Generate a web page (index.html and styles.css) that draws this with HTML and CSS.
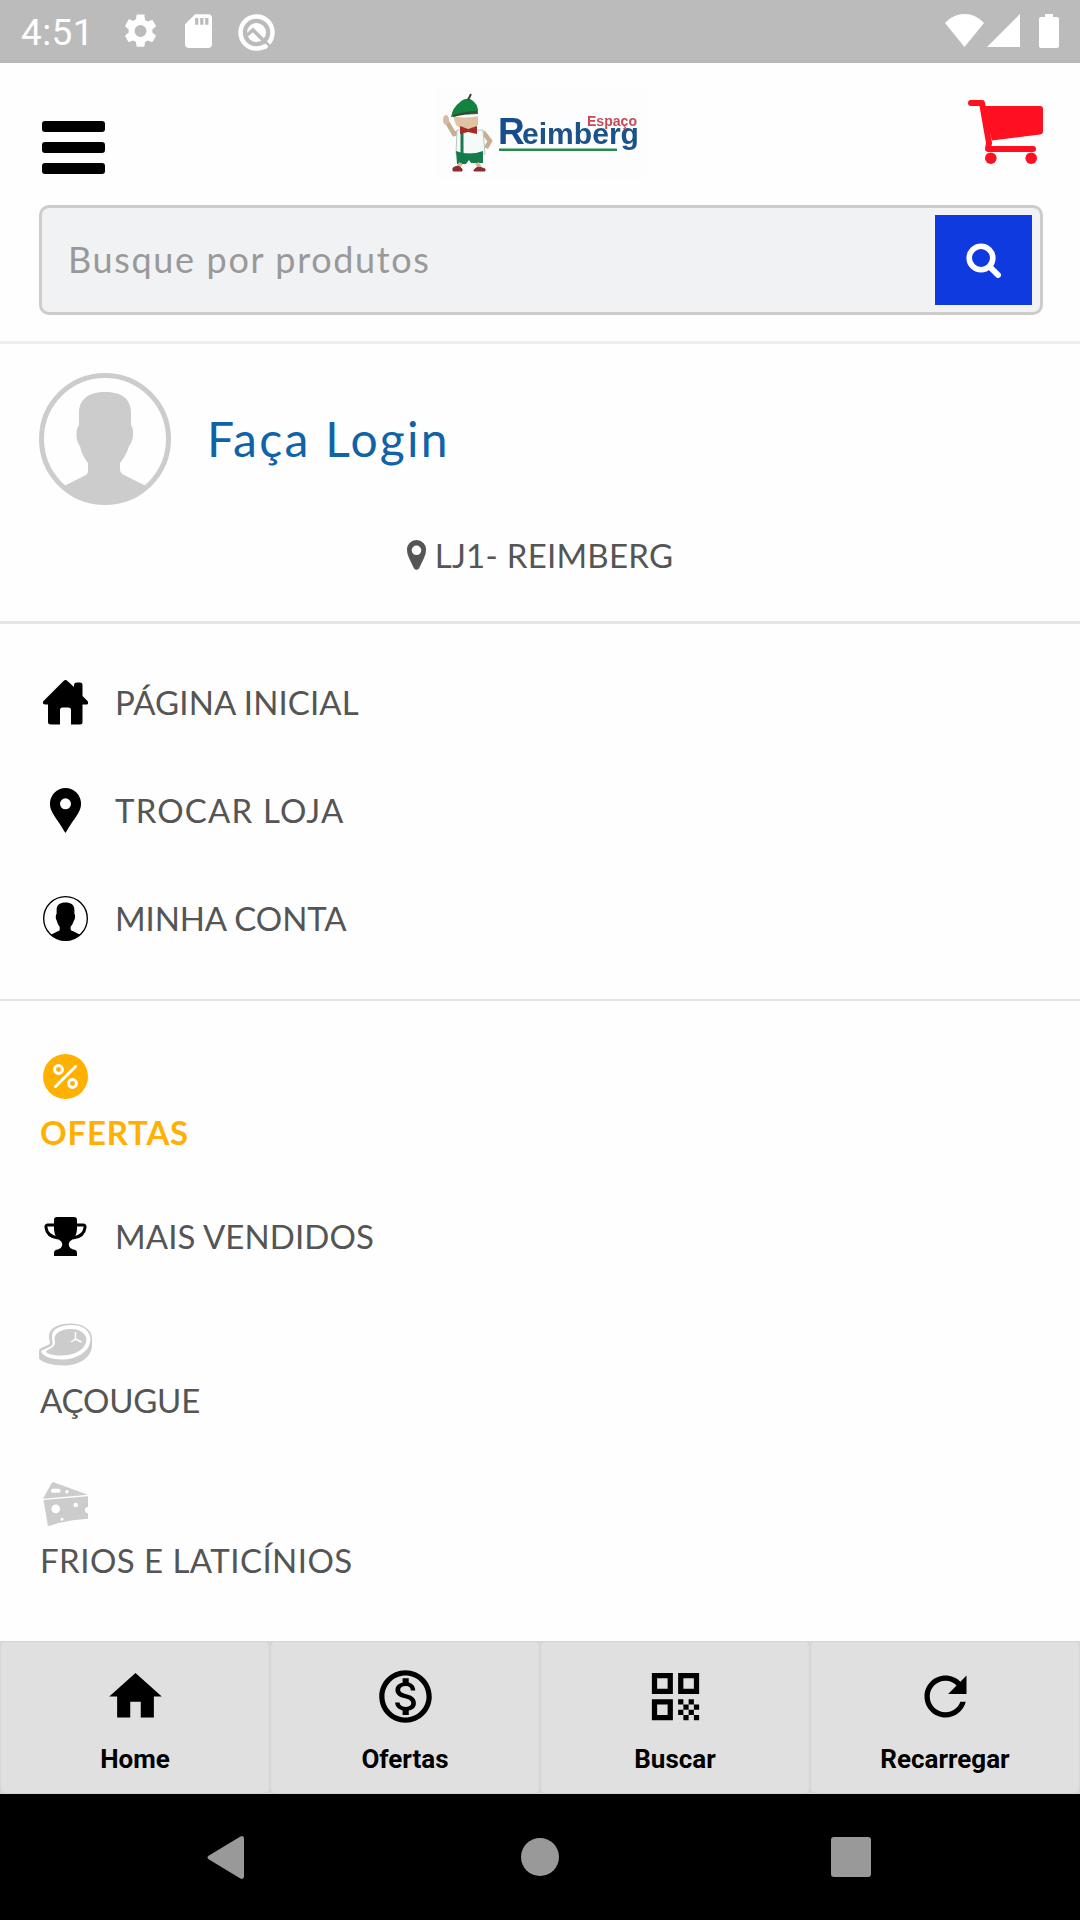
FILE: index.html
```html
<!DOCTYPE html>
<html lang="pt-BR">
<head>
<meta charset="utf-8">
<title>Espaço Reimberg</title>
<link rel="stylesheet" href="styles.css">
</head>
<body>
<svg class="sprite" aria-hidden="true">
  <symbol id="person" viewBox="0 0 132 132">
    <path d="M66 19C82 19 92 25 92 40V52C96 57 94 69 90 73C88 81 84 86 81 90V96C81 100 83 101 87 103L109 114A64 64 0 0 1 23 114L45 103C49 101 49 100 49 96V90C46 86 42 80 41 73C37 69 36 57 40 52V40C40 26 50 19 66 19Z"/>
  </symbol>
</svg>
<div class="screen">
  <div class="status">
    <span class="clock">4:51</span>
    <svg class="st-gear" viewBox="2 2 20 20"><path fill="#fff" d="M19.14 12.94c.04-.3.06-.61.06-.94s-.02-.64-.07-.94l2.03-1.58a.49.49 0 0 0 .12-.61l-1.92-3.32a.49.49 0 0 0-.59-.22l-2.39.96a7 7 0 0 0-1.62-.94l-.36-2.54A.48.48 0 0 0 13.92 2h-3.84a.48.48 0 0 0-.47.41l-.36 2.54c-.59.24-1.13.57-1.62.94l-2.39-.96a.48.48 0 0 0-.59.22L2.74 8.87a.48.48 0 0 0 .12.61l2.03 1.58c-.05.3-.09.63-.09.94s.02.64.07.94l-2.03 1.58a.49.49 0 0 0-.12.61l1.92 3.32c.12.22.37.29.59.22l2.39-.96c.5.38 1.03.7 1.62.94l.36 2.54c.05.24.24.41.48.41h3.84c.24 0 .44-.17.47-.41l.36-2.54a7 7 0 0 0 1.62-.94l2.39.96c.22.08.47 0 .59-.22l1.92-3.32a.48.48 0 0 0-.12-.61zM12 15.6a3.6 3.6 0 1 1 0-7.2 3.6 3.6 0 0 1 0 7.2z"/></svg>
    <svg class="st-sd" viewBox="4 2 16 20"><path fill="#fff" d="M18 2h-8L4.020 8 4 20c0 1.100.9 2 2 2h12c1.100 0 2-.9 2-2V4c0-1.100-.9-2-2-2z"/><path fill="#bbb" d="M10 4.300h1.900v4H10zM13 4.300h1.900v4H13zM16 4.300h1.900v4H16z"/></svg>
    <svg class="st-q" viewBox="0 0 37 37" fill="none"><circle cx="18.500" cy="18.500" r="16" stroke="#fff" stroke-width="4.500"/><circle cx="18.500" cy="18.500" r="9.500" fill="#fff"/><path d="M8 22l7-6 19 19" stroke="#bbb" stroke-width="3.500"/><path d="M26 31l3 3" stroke="#fff" stroke-width="4"/></svg>
    <svg class="st-wifi" viewBox="0 0 39 33"><path fill="#fff" d="M0 9C11-3 28-3 39 9L19.500 33z"/></svg>
    <svg class="st-cell" viewBox="0 0 33 33"><path fill="#fff" d="M33 0v33H0z"/></svg>
    <svg class="st-batt" viewBox="0 0 20 34"><path fill="#fff" d="M6 0h8v3h4a2 2 0 0 1 2 2v27a2 2 0 0 1-2 2H2a2 2 0 0 1-2-2V5a2 2 0 0 1 2-2h4z"/></svg>
  </div>

  <header class="header">
    <div class="topbar">
      <div class="burger"><i></i><i></i><i></i></div>
      <svg class="logo" viewBox="0 0 211 92">
        <rect width="211" height="92" fill="#fdfdfd"/>
        <path d="M12 34l7 12 6-2M48 44l7 9-4 7" fill="none" stroke="#c9ad93" stroke-width="4.500"/>
        <ellipse cx="11" cy="32" rx="3" ry="5" fill="#d9b9a4"/>
        <path d="M18 28q12 3 25 0v9q-12 8-22 0z" fill="#dfc3a2"/>
        <path d="M22 42h26l2 24H21z" fill="#f4faf8" stroke="#b4c9c4" stroke-width="1"/>
        <path d="M27 43v24" stroke="#1c7550" stroke-width="3"/>
        <path d="M16 29q2-10 8-14 5-5 11-4 9 4 8 15-13 0-27 3z" fill="#138240"/>
        <path d="M33 12l3-6M18 28q12-4 24-4" stroke="#3c4a33" stroke-width="2"/>
        <path d="M25 38l8 3 9-3v8l-9-2-8 2z" fill="#a52a28"/>
        <path d="M21 63q13 5 27 0v12H36l-2-3-3 4H22z" fill="#137c48"/>
        <path d="M26 75l-3 5M42 75l3 5" stroke="#d6b899" stroke-width="4"/>
        <path d="M18 80q5-4 9 1v2h-9zM39 82q3-5 11-1v2H39z" fill="#8c2d34" stroke="#8c2d34"/>
        <rect x="64" y="60.500" width="118" height="2.500" fill="#27894e"/>
        <text class="logo-big" x="63" y="56">R</text>
        <text class="logo-mid" x="87" y="56" textLength="117" lengthAdjust="spacingAndGlyphs">eimberg</text>
        <text class="logo-red" x="152" y="38" textLength="50" lengthAdjust="spacingAndGlyphs">Espaço</text>
      </svg>
      <svg class="cart" viewBox="0 0 75 64" fill="#ff1020"><path d="M3 3h11l7 40-1 6h45" fill="none" stroke="#ff1020" stroke-width="6" stroke-linecap="round" stroke-linejoin="round"/><path d="M15 6h57a3 3 0 0 1 3 3v22q0 3-3 3.500L24 40.500z"/><circle cx="22.800" cy="58.200" r="5.800"/><circle cx="63.200" cy="58.200" r="5.800"/></svg>
    </div>
    <div class="search">
      <span class="placeholder">Busque por produtos</span>
      <div class="search-btn"><svg viewBox="0 0 35 35" fill="none" stroke="#fff"><circle cx="15" cy="15" r="11.800" stroke-width="5.600"/><path d="M24 24l8 8" stroke-width="6" stroke-linecap="round"/></svg></div>
    </div>
  </header>

  <section class="account">
    <div class="login">
      <svg class="avatar" viewBox="0 0 132 132" fill="#ccc"><circle cx="66" cy="66" r="63.500" fill="none" stroke="#ccc" stroke-width="5"/><use href="#person"/></svg>
      <span class="login-text">Faça Login</span>
    </div>
    <div class="store">
      <svg viewBox="0 0 19 30"><path fill="#555" fill-rule="evenodd" d="M9.500 0a9.500 9.500 0 0 1 9.500 10q0 4-2 8l-5 10.500q-2.500 2.500-5 0L2 18q-2-4-2-8A9.500 9.500 0 0 1 9.500 0zm0 5.500a4.800 4.800 0 1 0 0 9.600 4.800 4.800 0 0 0 0-9.600z"/></svg>
      <span class="store-text">LJ1- REIMBERG</span>
    </div>
  </section>

  <section class="menu">
    <div class="row">
      <svg class="icon" viewBox="0 0 45 45"><path d="M20.500 1q2-2 4 0L31 7V5q0-2.500 3-2.500h3q2.500 0 2.500 2.500v11l5 5q2 3.500-2 3.500h-3V42q0 2.500-2.500 2.500H28V30q0-2.500-2.500-2.500h-6Q17 27.500 17 30v14.500H8Q5 44.500 5 42V24.500H2Q-1.500 24 .5 21z"/></svg>
      <span class="label t-home">PÁGINA INICIAL</span>
    </div>
    <div class="row">
      <svg class="icon" viewBox="0 0 45 45"><path fill-rule="evenodd" d="M22.500 0A15.500 15.500 0 0 1 38 16c0 8-6 13-15.500 29C13 29 7 24 7 16A15.500 15.500 0 0 1 22.500 0zm0 10.300a5.500 5.500 0 1 0 0 11 5.500 5.500 0 0 0 0-11z"/></svg>
      <span class="label t-store">TROCAR LOJA</span>
    </div>
    <div class="row">
      <svg class="icon" viewBox="0 0 132 132"><circle cx="66" cy="66" r="64" fill="none" stroke="#000" stroke-width="4"/><use href="#person"/></svg>
      <span class="label t-acc">MINHA CONTA</span>
    </div>
  </section>

  <section class="categories">
    <div class="stack">
      <svg class="icon" viewBox="0 0 45 45" fill="none" stroke="#fff"><circle cx="22.500" cy="22.500" r="22.500" fill="#ffb000" stroke="none"/><circle cx="15.500" cy="15.500" r="3.900" stroke-width="3"/><circle cx="29.500" cy="29.500" r="3.900" stroke-width="3"/><path d="M12.500 32.500l20-20" stroke-width="3" stroke-linecap="round"/></svg>
      <span class="label offers">OFERTAS</span>
    </div>
    <div class="row row-best">
      <svg class="icon" viewBox="-1 -3 45 45"><path d="M13 0h17q3 0 3 3v10q-1 8-6 10.500-3 2-2 5.500 1 3 4 3.500 4 0 4 3.500v3H10v-3q0-3.500 4-3.500 3-.5 4-3.500 1-3.500-2-5.500-5-2.500-6-10.500V3q0-3 3-3z"/><path d="M11 8H4q-2.500 0-2 2.500 1 9 12 10.500M32 8h7q2.500 0 2 2.500-1 9-12 10.500" fill="none" stroke="#000" stroke-width="3"/></svg>
      <span class="label t-best">MAIS VENDIDOS</span>
    </div>
    <div class="stack">
      <svg class="icon icon-meat" viewBox="0 0 53 42"><path fill="#ccc" d="M0 27q0-2 3-3l6-2.500q3-1.500 1.500-4.500-.5-2-.5-4C10 4 20 0 31 0c13 0 22 6 22 15v7c0 11-12 20-28 20-12 0-22-3-25-7z"/><path fill="#fff" d="M2 27.500l9.500-4.500c4-2 1-5.500 1.500-11C13.500 5 22 1.500 32 1.500c12 0 19.500 6 19.500 14.500C51 28 38 36 23 36 11 36 3 32 2 27.500z"/><path fill="#ccc" d="M7 27.500C15 23.500 17 22 15.500 15 16.500 8 24 5.500 32 5.500c9 0 15.500 4.500 15.500 11.500C46 26 36 32 22 32c-8 0-15-1.500-15-4.500z"/><path d="M36.500 8.500v7l-4.500 3m4.500-3l6 3" fill="none" stroke="#fff" stroke-width="1.500"/></svg>
      <span class="label t-meat">AÇOUGUE</span>
    </div>
    <div class="stack">
      <svg class="icon icon-cheese" viewBox="0 0 46 45"><path fill="#ccc" d="M8.500 1q1.500-1.500 3-1L46 12.500 0 16.500zM.5 18L46 14v11a3.200 3.200 0 0 0 0 6.400V37q-16 1-30 4.500-6 2-11 3z"/><g fill="#fff"><rect x="8" y="6.500" width="10" height="4" rx="2"/><circle cx="24.500" cy="9.500" r="1.800"/><circle cx="13" cy="27" r="4.400"/><circle cx="33.500" cy="23" r="2.400"/><circle cx="19.500" cy="37.500" r="1.500"/></g></svg>
      <span class="label t-cheese">FRIOS E LATICÍNIOS</span>
    </div>
  </section>

  <nav class="tabs">
    <div class="tab"><svg viewBox="0 0 24 24"><path d="M10 20v-6h4v6h5v-8h3L12 3 2 12h3v8z"/></svg><span>Home</span></div>
    <div class="tab"><svg viewBox="0 0 24 24"><path d="M12 2C6.480 2 2 6.480 2 12s4.480 10 10 10 10-4.480 10-10S17.520 2 12 2zm0 18c-4.410 0-8-3.590-8-8s3.590-8 8-8 8 3.590 8 8-3.590 8-8 8zm.31-8.860c-1.770-.45-2.340-.94-2.340-1.670 0-.84.79-1.430 2.100-1.430 1.380 0 1.900.66 1.940 1.640h1.710c-.05-1.340-.87-2.570-2.490-2.970V5H10.900v1.690c-1.510.32-2.720 1.300-2.720 2.810 0 1.790 1.490 2.690 3.660 3.210 1.950.46 2.340 1.150 2.340 1.870 0 .53-.39 1.390-2.100 1.390-1.600 0-2.230-.72-2.320-1.640H8.040c.1 1.700 1.360 2.660 2.860 2.970V19h2.340v-1.670c1.520-.29 2.720-1.160 2.730-2.770-.01-2.200-1.900-2.960-3.660-3.420z"/></svg><span>Ofertas</span></div>
    <div class="tab"><svg viewBox="0 0 24 24"><path d="M3 11h8V3H3v8zm2-6h4v4H5V5zM3 21h8v-8H3v8zm2-6h4v4H5v-4zM13 3v8h8V3h-8zm6 6h-4V5h4v4zM19 19h2v2h-2zM13 13h2v2h-2zM15 15h2v2h-2zM13 17h2v2h-2zM15 19h2v2h-2zM17 17h2v2h-2zM17 13h2v2h-2zM19 15h2v2h-2z"/></svg><span>Buscar</span></div>
    <div class="tab"><svg viewBox="0 0 24 24"><path d="M17.650 6.350C16.200 4.900 14.210 4 12 4c-4.420 0-7.990 3.580-7.990 8s3.570 8 7.990 8c3.730 0 6.840-2.550 7.730-6h-2.080c-.82 2.330-3.040 4-5.650 4-3.310 0-6-2.690-6-6s2.690-6 6-6c1.660 0 3.140.69 4.220 1.780L13 11h7V4l-2.350 2.350z"/></svg><span>Recarregar</span></div>
  </nav>
  <div class="system">
    <svg viewBox="0 0 37 43"><path fill="#999" d="M2 19.500L33 .7q4-2 4 2v37.600q0 4-4 2L2 23.500q-3-2 0-4z"/></svg>
    <i class="sys-home"></i>
    <i class="sys-recent"></i>
  </div>
</div>
</body>
</html>
```
FILE: styles.css
```css
* { box-sizing: border-box; }
body { margin: 0; background: #fefefe; font-family: Lato, "Noto Sans", sans-serif; color: #555; }
svg { display: block; flex: none; }
.sprite { display: none; }
.screen { width: 1080px; height: 1920px; display: flex; flex-direction: column; overflow: hidden; }

/* status bar */
.status { height: 63px; flex: none; display: flex; align-items: flex-start; padding: 14px 21px 0 21px; background: #bbb; border-bottom: 3px solid #b8b8b8; }
.clock { width: 103px; font: 400 37px/38px Roboto, sans-serif; color: #fff; letter-spacing: 0.4px; }
.st-gear { width: 33px; height: 34px; margin-right: 28px; }
.st-sd { width: 27px; height: 34px; margin-right: 26px; }
.st-q { width: 37px; height: 37px; margin-right: auto; }
.st-wifi { width: 39px; height: 33px; margin-right: 3px; }
.st-cell { width: 33px; height: 33px; margin-right: 19px; }
.st-batt { width: 20px; height: 34px; }

/* header */
.header { height: 281px; flex: none; border-bottom: 3px solid #eee; }
.topbar { height: 142px; padding: 25px 37px 0 42px; display: grid; grid-template-columns: 1fr 211px 1fr; align-items: start; }
.burger { margin-top: 33px; width: 63px; display: grid; gap: 10.5px; }
.burger i { height: 10.5px; border-radius: 3px; background: #000; }
.logo { width: 211px; height: 92px; margin-left: -2px; filter: blur(0.6px); }
.logo-big { font: 700 37px "Liberation Sans", sans-serif; fill: #174d8c; }
.logo-mid { font: 700 30px "Liberation Sans", sans-serif; fill: #1b5289; }
.logo-red { font: 700 14px "Liberation Sans", sans-serif; fill: #c64a58; }
.cart { width: 75px; height: 64px; margin-top: 12px; justify-self: end; }
.search { height: 110px; margin: 0 37px 0 39px; padding: 0 8px 0 26px; display: flex; align-items: center; justify-content: space-between; border: 3px solid #ccc; border-radius: 10px; background: #f1f2f4; }
.placeholder { padding-bottom: 2px; font-size: 36px; line-height: 44px; color: #999; letter-spacing: 1.65px; }
.search-btn { width: 97px; height: 90px; display: flex; align-items: center; justify-content: center; background: #0f3ae0; }
.search-btn svg { width: 35px; height: 35px; }

/* account */
.account { height: 280px; flex: none; padding: 29px 39px 0; border-bottom: 3px solid #e5e5e5; }
.login { display: flex; align-items: center; gap: 36px; }
.avatar { width: 132px; height: 132px; }
.login-text { font-size: 48px; line-height: 56px; color: #1163a8; letter-spacing: 2.3px; }
.store { margin-top: 30px; display: flex; justify-content: center; align-items: center; gap: 9px; font-size: 33px; line-height: 40px; letter-spacing: 0.25px; }
.store svg { width: 19px; height: 30px; }

/* menu lists */
.menu { height: 377px; flex: none; padding-top: 24px; border-bottom: 2px solid #e5e5e5; }
.categories { height: 640px; flex: none; padding-top: 22px; }
.row { height: 108px; padding-left: 43px; display: flex; align-items: center; gap: 27px; }
.row-best { padding-bottom: 2px; }
.stack { height: 160px; padding: 31px 0 0 40px; display: flex; flex-direction: column; align-items: flex-start; gap: 13px; }
.icon { width: 45px; height: 45px; }
.stack .icon { margin-left: 3px; }
.stack .icon-meat { width: 53px; margin-left: -1px; }
.label { font-size: 33px; line-height: 40px; white-space: nowrap; }
.t-home, .t-best { letter-spacing: 0.1px; }
.t-store { letter-spacing: 1.15px; }
.t-acc { letter-spacing: -0.1px; }
.t-meat { letter-spacing: -0.2px; }
.t-cheese { letter-spacing: 0.45px; }
.stack .offers { font-weight: 700; color: #ffb000; letter-spacing: 0.8px; }

/* tab bar */
.tabs { height: 153px; flex: none; display: grid; grid-template-columns: repeat(4, 1fr); background: #d8d8d8; }
.tab { padding-top: 24px; display: flex; flex-direction: column; align-items: center; gap: 15px; background: #e0e0e0; border-radius: 5px; box-shadow: inset 0 0 2px #bdbdbd; }
.tab svg { width: 63px; height: 63px; }
.tab span { font: 700 26px/32px Roboto, sans-serif; color: #000; }

/* system buttons */
.system { flex: 1; display: flex; align-items: center; justify-content: space-between; padding: 0 209px 0 207px; background: #000; }
.system svg { width: 37px; height: 43px; }
.sys-home { width: 38px; height: 38px; border-radius: 50%; background: #999; margin-left: 5px; }
.sys-recent { width: 40px; height: 40px; border-radius: 3px; background: #999; }
```
